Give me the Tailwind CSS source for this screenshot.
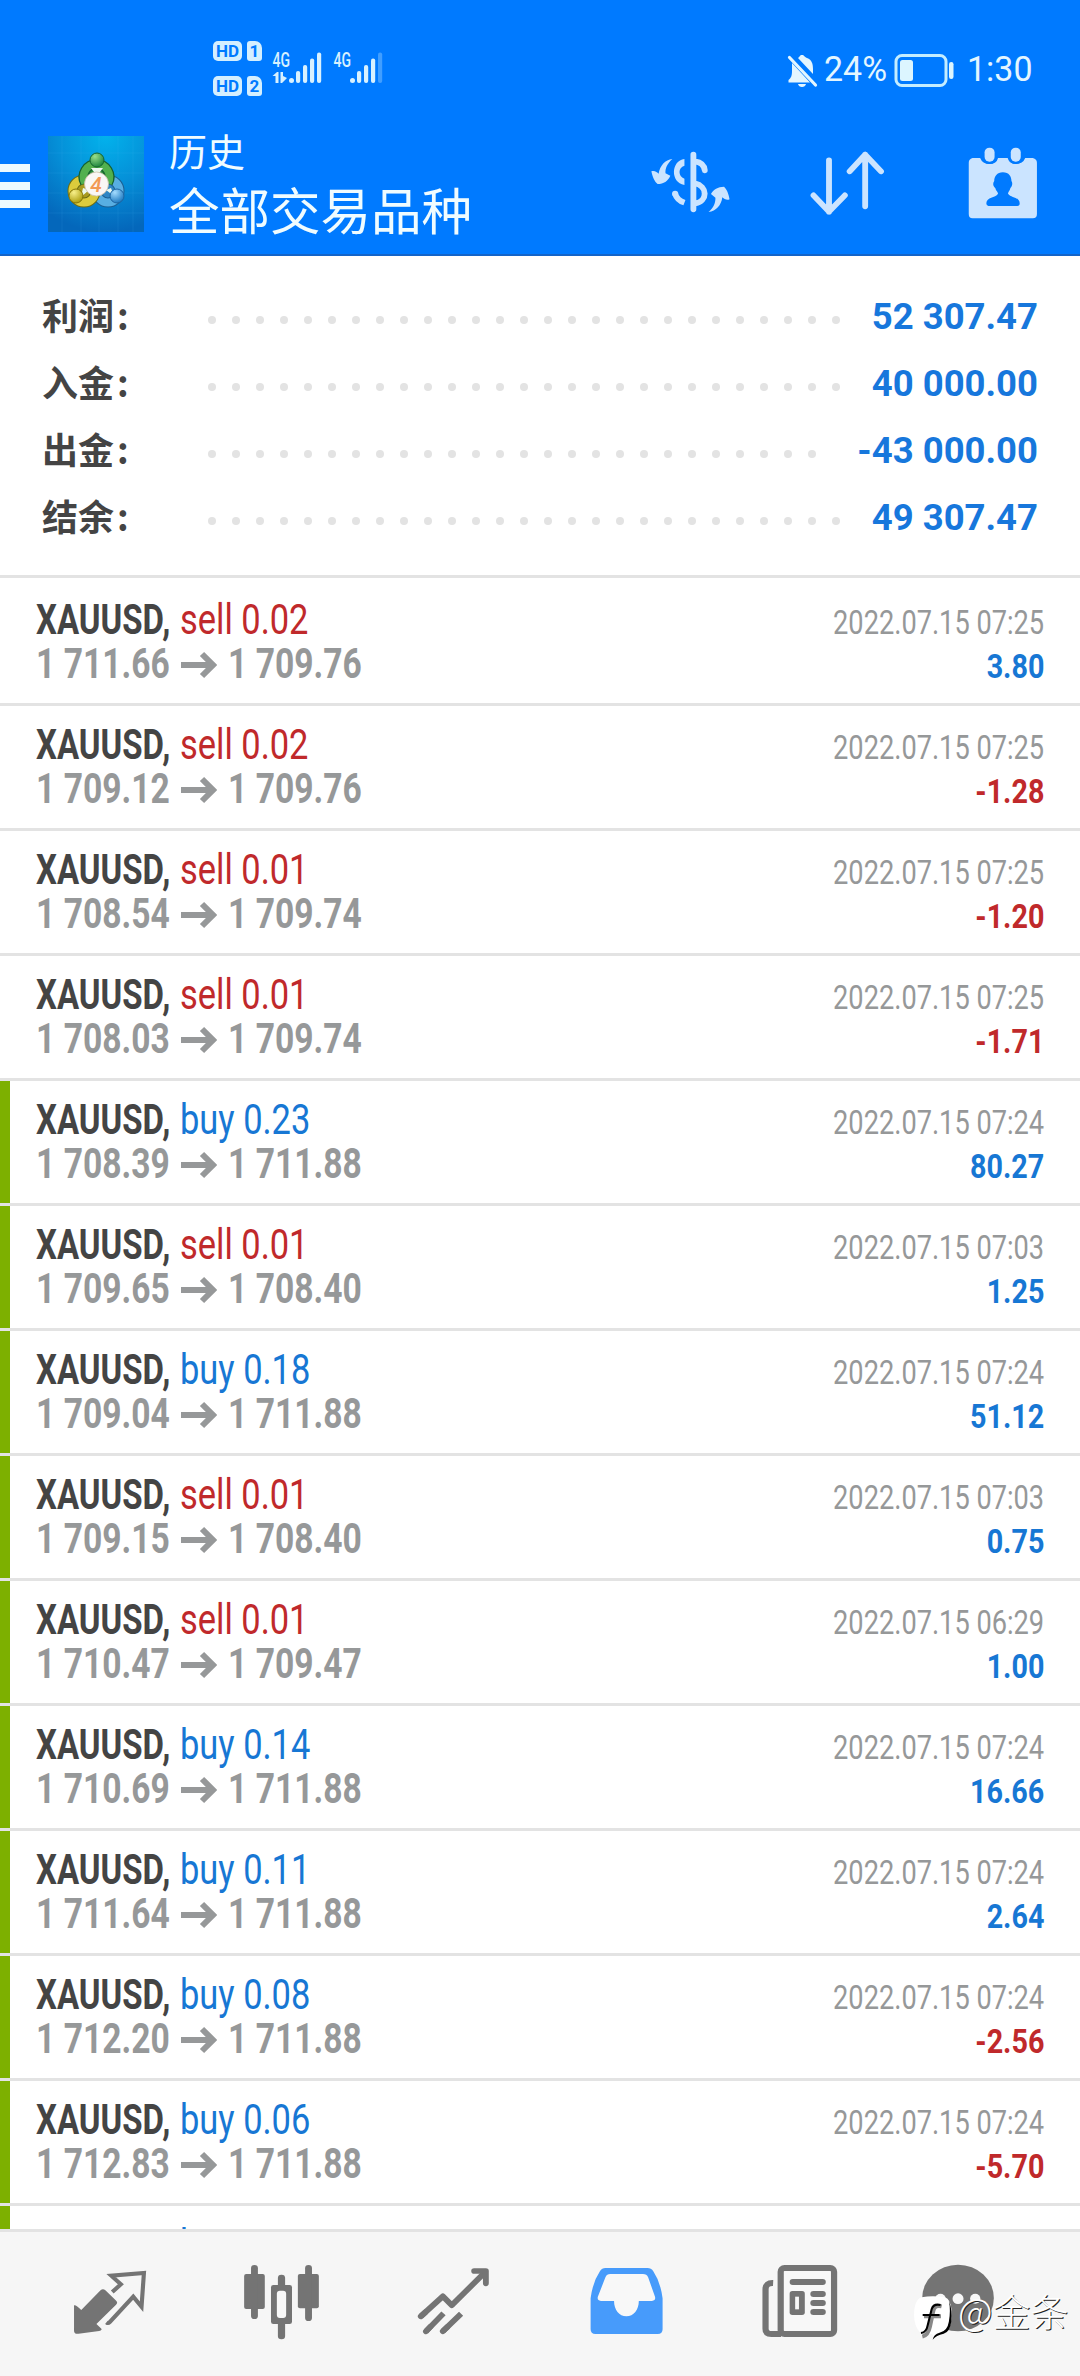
<!DOCTYPE html>
<html lang="zh-CN">
<head>
<meta charset="utf-8">
<title>历史</title>
<script src="https://cdn.jsdelivr.net/npm/@tailwindcss/browser@4"></script>
</head>
<body class="bg-white font-[Roboto,'Noto_Sans_CJK_SC',sans-serif] overflow-hidden">
<div class="relative flex h-[2376px] w-[1080px] flex-col overflow-hidden bg-white">

<header class="flex h-64 shrink-0 flex-col border-b-2 border-[#1464c8] bg-[#007aff]">
  <!-- status bar -->
  <div class="flex h-[120px] shrink-0 items-start justify-between pr-[46px] pl-[213px] text-[#e4f6ff]">
    <div class="flex pt-[41px]">
      <div class="flex w-[49px] flex-col gap-[15px] text-[17px] leading-5 font-bold text-[#007aff]">
        <div class="flex gap-[5px]"><span class="flex h-5 w-[29px] items-center justify-center rounded-[5px] bg-[#d4efff]">HD</span><span class="flex h-5 w-[15px] items-center justify-center rounded-[3px] rounded-tr-[7px] bg-[#d4efff]">1</span></div>
        <div class="flex gap-[5px]"><span class="flex h-5 w-[29px] items-center justify-center rounded-[5px] bg-[#d4efff]">HD</span><span class="flex h-5 w-[15px] items-center justify-center rounded-[3px] rounded-tr-[7px] bg-[#d4efff]">2</span></div>
      </div>
      <svg class="ml-[10px] h-[50px] w-[120px]" viewBox="0 0 120 50" fill="#d8f1ff">
        <text x="0.5" y="25.5" font-size="20" font-weight="500" textLength="17.5" lengthAdjust="spacingAndGlyphs">4G</text>
        <text x="61.5" y="25.5" font-size="20" font-weight="500" textLength="17.5" lengthAdjust="spacingAndGlyphs">4G</text>
        <path d="M0.500 35 L5 31 H6.500 V42 H3.500 V35ZM8.500 31 H11 V35 L15 37 L10 42 H8.500Z"/>
        <circle cx="19.500" cy="39.500" r="2.500"/><rect x="24" y="30" width="4.200" height="12" rx="2"/><rect x="31" y="24" width="4.200" height="18" rx="2"/><rect x="38" y="17.500" width="4.200" height="24.500" rx="2"/><rect x="45" y="11.500" width="4.200" height="30.500" rx="2"/>
        <circle cx="80.500" cy="39.500" r="2.500"/><rect x="85" y="30" width="4.200" height="12" rx="2"/><rect x="92" y="24" width="4.200" height="18" rx="2"/><rect x="99" y="17.500" width="4.200" height="24.500" rx="2"/><rect x="106" y="11.500" width="4.200" height="30.500" rx="2" opacity=".3"/>
      </svg>
    </div>
    <div class="flex items-center pt-[50px] text-[35px] leading-10">
      <svg class="h-9 w-[31px]" viewBox="0 0 31 36" fill="#e4f6ff"><path d="M11 6 C13 5 12.500 3 15 3 C17.500 3 17 5 20 6 C25 8 26 12 26 17 V22Z"/><path d="M5 11 L23 30.500 H1.500 V28 C4 26 5 24 5 19Z"/><path d="M2.500 5.500 L28.500 33" stroke="#e4f6ff" stroke-width="3.200" stroke-linecap="round"/><path d="M11 32 H19 C18.500 34 17 35 15 35 S11.500 34 11 32Z"/></svg>
      <span class="ml-[6px] w-[66px] origin-left scale-x-[0.97]">24%</span>
      <svg class="ml-[4px] h-9 w-[62px]" viewBox="0 0 62 36" fill="#dcf5ff"><rect x="2" y="3.500" width="50" height="30" rx="6" fill="none" stroke="#c4edff" stroke-width="3"/><rect x="6" y="8" width="13" height="21" rx="2.500"/><rect x="55" y="10" width="4.500" height="17" rx="2.200"/></svg>
      <span class="ml-[11px] w-[67px] origin-left scale-x-[0.97]">1:30</span>
    </div>
  </div>
  <!-- toolbar -->
  <div class="flex h-[134px] shrink-0 items-start">
    <div class="mt-[44px] flex w-[30px] flex-col gap-[10px]"><i class="h-2 bg-[#ecfaff]"></i><i class="h-2 bg-[#ecfaff]"></i><i class="h-2 bg-[#ecfaff]"></i></div>
    <svg class="mt-4 ml-[18px] h-24 w-24" viewBox="0 0 96 96">
      <defs>
        <radialGradient id="bg" cx=".6" cy="0" r="1"><stop offset="0" stop-color="#02b2ec"/><stop offset=".5" stop-color="#0590d8"/><stop offset="1" stop-color="#0467bb"/></radialGradient>
        <radialGradient id="g" cx=".35" cy=".25" r=".8"><stop offset="0" stop-color="#9be08c"/><stop offset="1" stop-color="#17803a"/></radialGradient>
        <radialGradient id="y" cx=".35" cy=".25" r=".8"><stop offset="0" stop-color="#f8f08a"/><stop offset="1" stop-color="#a89a08"/></radialGradient>
        <radialGradient id="b" cx=".35" cy=".25" r=".8"><stop offset="0" stop-color="#a4dcff"/><stop offset="1" stop-color="#1674bd"/></radialGradient>
      </defs>
      <rect width="96" height="96" fill="url(#bg)"/>
      <path d="M0 17H96M0 37H96M0 57H96M0 77H96M14 0V96M33 0V96M51 0V96M70 0V96M85 0V96" stroke="#5fd0ff" stroke-opacity=".1"/>
      <circle cx="60" cy="55" r="11.500" fill="#2f86c4" stroke="#1b5f92" stroke-width="10"/><circle cx="60" cy="55" r="11.500" fill="none" stroke="#58aee2" stroke-width="8"/>
      <circle cx="36" cy="55" r="11.500" fill="#a89a20" stroke="#6c6c14" stroke-width="10"/><circle cx="36" cy="55" r="11.500" fill="none" stroke="#dccb3c" stroke-width="8"/>
      <path d="M37 47 A13 13 0 1 1 60 47" fill="#2b8a3c" stroke="#16602f" stroke-width="10"/><path d="M37 47 A13 13 0 1 1 60 47" fill="none" stroke="#52b04e" stroke-width="7.500"/>
      <path d="M43 32 L49 40 L55 32ZM33 61 L41 54 L35 52ZM66 60 L58 54 L63 52Z" fill="#eaf8ee"/>
      <circle cx="49" cy="24" r="7" fill="url(#g)" stroke="#17662e"/>
      <circle cx="28" cy="60" r="7" fill="url(#y)" stroke="#857508"/>
      <circle cx="69" cy="60" r="7" fill="url(#b)" stroke="#1d65a3"/>
      <circle cx="48.500" cy="48" r="12" fill="#faf7f5" stroke="#cbbfa8" stroke-width=".8"/>
      <text x="48" y="55.500" text-anchor="middle" font-size="21" font-weight="500" font-style="italic" fill="#f29a55">4</text>
    </svg>
    <div class="mt-2 ml-[25px] flex flex-col text-[#f0fcff]">
      <span class="h-[55px] text-[38px] leading-[50px]">历史</span>
      <span class="h-[64px] text-[50.5px] leading-[60px]">全部交易品种</span>
    </div>
    <svg class="mt-6 ml-[178px] h-[80px] w-[82px]" viewBox="318 342 238.100 240" preserveAspectRatio="none" fill="#cbe4ff">
      <path d="M383 387 C367 402 362 416 363 430 L377 437 C370 453 358 462 340 462 C332 456 325 441 322 424 C330 420 339 426 343 431 C347 407 362 389 383 387Z"/>
      <path d="M488 546 C504 531 508 519 508 503 L495 492 C502 479 515 470 533 470 C541 478 546 490 549 508 C542 512 534 508 528 502 C525 526 510 544 488 546Z"/>
      <path d="M418 387 C379 391 376 458 418 465 V446 C399 439 399 412 418 407Z"/>
      <path d="M391 491 Q396 510 418 518" fill="none" stroke="#cbe4ff" stroke-width="17"/><circle cx="391" cy="491" r="9"/>
      <path d="M444 374V538M448 394Q475 398 477 421M448 460C486 468 486 514 450 520" stroke="#cbe4ff" stroke-width="17" stroke-linecap="round" fill="none"/>
    </svg>
    <svg class="mt-6 ml-[76px] h-[80px] w-[80px]" viewBox="775 342 232.300 240" preserveAspectRatio="none" fill="none" stroke="#cbe4ff" stroke-width="17" stroke-linecap="round" stroke-linejoin="round"><path d="M836 391V545M791 496L836 545L882 496M941 529V374M896 424L941 374L987 424"/></svg>
    <svg class="mt-6 ml-[78px] h-[80px] w-[74px]" viewBox="1235 342 214.900 240" preserveAspectRatio="none" fill="#cbe4ff">
      <path d="M1254 384 H1276 Q1283 402 1303 402 Q1324 402 1328 384 H1356 Q1361 402 1380 402 Q1400 402 1407 384 H1429 Q1441 387 1441 398 V552 Q1441 565 1429 565 H1254 Q1243 565 1243 552 V398 Q1243 387 1254 384Z"/>
      <g stroke="#007aff" stroke-width="14"><rect x="1289" y="353" width="29" height="42" rx="14"/><rect x="1365" y="353" width="29" height="42" rx="14"/></g>
      <rect x="1289" y="353" width="29" height="42" rx="14"/><rect x="1365" y="353" width="29" height="42" rx="14"/>
      <path d="M1342 427 C1360 427 1367 440 1367 453 C1372 461 1368 471 1364 474 C1362 483 1357 486 1357 491 C1366 504 1390 500 1391 520 Q1391 528 1384 528 H1300 Q1294 528 1294 520 C1295 500 1320 504 1328 491 C1328 486 1322 483 1320 474 C1315 470 1311 461 1317 453 C1317 440 1325 427 1342 427Z" fill="#007aff"/>
    </svg>
  </div>
</header>

<!-- account summary -->
<section id="summary" class="flex h-[322px] shrink-0 flex-col border-b-[3px] border-[#e3e3e3] pt-[26px] pr-[42px] pl-[42px]"></section>

<!-- deals -->
<main id="deals" class="flex h-[1651px] shrink-0 flex-col overflow-hidden pt-[3px]"></main>

<!-- bottom navigation -->
<nav class="flex h-[147px] shrink-0 border-t-[3px] border-[#e3e3e3] bg-[#f6f6f6] pl-6">
  <svg class="h-36 w-[172px] shrink-0" viewBox="69.700 156 499.500 432" preserveAspectRatio="none" fill="#747474">
    <path d="M215 376 Q220 373 236 390 L292 331 Q299 324 306 331 L336 361 Q344 368 337 374 L280 432 L293 445 Q299 450 288 453 L228 461 Q215 463 215 452Z"/>
    <path d="M326 336 L351 313 L323 287 L418 279 L411 380 L387 350 L318 427 Q314 431 309 427" fill="none" stroke="#747474" stroke-width="12"/>
  </svg>
  <svg class="h-36 w-[172px] shrink-0" viewBox="569.200 156 499.500 432" preserveAspectRatio="none" fill="#747474">
    <rect x="709" y="282" width="60" height="105" rx="6"/><rect x="729" y="255" width="20" height="162" rx="10"/>
    <rect x="865" y="282" width="61" height="103" rx="6"/><rect x="886" y="255" width="20" height="168" rx="10"/>
    <rect x="807" y="284" width="21" height="194" rx="10"/><rect x="787" y="315" width="61" height="117" rx="7"/><rect x="804" y="332" width="27" height="82" rx="9" fill="#f8f8f8"/>
  </svg>
  <svg class="h-36 w-[172px] shrink-0" viewBox="1068.700 156 499.500 432" preserveAspectRatio="none" fill="none" stroke="#747474" stroke-width="17">
    <path d="M1222 409L1286 349L1312 376L1410 275" stroke-linejoin="round"/><path d="M1377 273H1411V310" stroke-linecap="round" stroke-linejoin="round"/><path d="M1222 409L1235 397M1237 454L1250 440M1286 454L1299 441" stroke-linecap="round"/><path d="M1237 454L1288 400M1286 454L1339 401"/>
  </svg>
  <svg class="h-36 w-[172px] shrink-0" viewBox="0 156 499.500 432" preserveAspectRatio="none" fill="#479bfb">
    <path d="M190 264H312Q323 264 329 274Q350 306 356 355V448Q356 462 342 462H161Q147 462 147 448V355Q153 306 174 274Q180 264 190 264Z"/>
    <path d="M204 282H299Q310 282 314 292L334 350Q337 362 325 363H287C287 389 272 409 251 409S215 389 215 363H177Q165 362 168 350L190 292Q194 282 204 282Z" fill="#f8f8f8"/>
  </svg>
  <svg class="h-36 w-[172px] shrink-0" viewBox="499.500 156 499.500 432" preserveAspectRatio="none" fill="#747474">
    <path d="M677 309Q655 308 655 328V446Q655 462 672 462H700" fill="none" stroke="#747474" stroke-width="18"/>
    <rect x="699" y="264" width="155" height="198" rx="11" fill="#f8f8f8" stroke="#747474" stroke-width="18"/>
    <rect x="725" y="297" width="105" height="18" rx="9"/><rect x="725" y="333" width="44" height="72" rx="8"/><rect x="741" y="350" width="11" height="38" fill="#f8f8f8"/>
    <rect x="785" y="333" width="45" height="18" rx="9"/><rect x="785" y="360" width="45" height="18" rx="9"/><rect x="785" y="387" width="45" height="18" rx="9"/>
  </svg>
  <svg class="h-36 w-[196px] shrink-0" viewBox="999 156 569.200 432" preserveAspectRatio="none" fill="#747474">
    <ellipse cx="1214" cy="354" rx="104" ry="100"/><g fill="#f8f8f8"><circle cx="1163" cy="356" r="15"/><circle cx="1214" cy="356" r="16"/><circle cx="1264" cy="356" r="15"/></g>
  </svg>
</nav>

<!-- author signature -->
<div class="absolute top-[2290px] left-[912px] flex items-start">
  <svg class="h-[52px] w-[43px]" viewBox="1080 330 124.900 156" preserveAspectRatio="none">
    <path d="M1108 352 Q1140 345 1176 352 Q1192 358 1195 390 Q1197 440 1180 457 Q1160 464 1142 478 Q1143 466 1138 462 L1104 458 Q1086 440 1086 405 Q1086 360 1108 352Z" fill="#fff"/>
    <path d="M1187 362 Q1198 390 1194 425 Q1190 456 1172 461 Q1150 466 1140 479 Q1143 462 1160 458 Q1183 453 1187 425 Q1193 390 1187 362Z" fill="#000"/>
    <path d="M1166 379Q1146 374 1142 392L1132 440Q1127 466 1110 470M1115 409H1164" fill="none" stroke="#888" stroke-width="12"/>
    <path d="M1163 375Q1142 370 1137 388L1126 434Q1122 458 1106 459M1111 405H1160" fill="none" stroke="#000" stroke-width="6"/>
  </svg>
  <span class="-mt-[3px] ml-[3px] font-['Noto_Sans_CJK_SC'] text-[38px] leading-[46px] font-light whitespace-nowrap text-white [text-shadow:1px_1px_0_#222]">@金条</span>
</div>
</div>

<script>
const summary = [['利润', '52 307.47', 27], ['入金', '40 000.00', 27], ['出金', '-43 000.00', 26], ['结余', '49 307.47', 27]];
document.getElementById('summary').innerHTML = summary.map(([label, value, dots]) => `
  <div class="flex h-[67px] items-start text-[36px] leading-[67px] font-bold">
    <span class="-mt-px flex w-[166px] gap-[3px] font-['Noto_Sans_CJK_SC'] text-[#444]">${label}<span>:</span></span>
    <span class="mt-[34px] flex gap-4">${'<i class="size-2 rounded-full bg-[#e3e3e3]"></i>'.repeat(dots)}</span>
    <span class="mt-px ml-auto text-[36.5px] text-[#1777dc]">${value}</span>
  </div>`).join('');

const deals = [
  ['sell 0.02', '1 711.66', '1 709.76', '07:25', '3.80', 0],
  ['sell 0.02', '1 709.12', '1 709.76', '07:25', '-1.28', 0],
  ['sell 0.01', '1 708.54', '1 709.74', '07:25', '-1.20', 0],
  ['sell 0.01', '1 708.03', '1 709.74', '07:25', '-1.71', 0],
  ['buy 0.23', '1 708.39', '1 711.88', '07:24', '80.27', 1],
  ['sell 0.01', '1 709.65', '1 708.40', '07:03', '1.25', 1],
  ['buy 0.18', '1 709.04', '1 711.88', '07:24', '51.12', 1],
  ['sell 0.01', '1 709.15', '1 708.40', '07:03', '0.75', 1],
  ['sell 0.01', '1 710.47', '1 709.47', '06:29', '1.00', 1],
  ['buy 0.14', '1 710.69', '1 711.88', '07:24', '16.66', 1],
  ['buy 0.11', '1 711.64', '1 711.88', '07:24', '2.64', 1],
  ['buy 0.08', '1 712.20', '1 711.88', '07:24', '-2.56', 1],
  ['buy 0.06', '1 712.83', '1 711.88', '07:24', '-5.70', 1],
  ['buy 0.05', '1 713.20', '1 711.88', '07:24', '-6.60', 1],
];
document.getElementById('deals').innerHTML = deals.map(([side, open, close, time, profit, marked]) => `
  <div class="flex h-[125px] shrink-0 border-b-[3px] border-[#e3e3e3]">
    <i class="${marked ? 'w-[10px] shrink-0 bg-[#7db000]' : 'w-[10px] shrink-0'}"></i>
    <div class="ml-[26px] flex flex-col pt-[17px] text-[42px] leading-[44px] whitespace-nowrap">
      <div class="flex"><span class="w-[144px] origin-left scale-x-[0.785] font-bold text-[#444]">XAUUSD,</span><span class="${side[0] === 's' ? 'origin-left scale-x-[0.82] text-[#c0292b]' : 'origin-left scale-x-[0.82] text-[#1777d4]'}">${side}</span></div>
      <div class="flex items-center font-bold text-[#969899]"><span class="w-[145px] origin-left scale-x-[0.8]">${open}</span><svg class="mt-0.5 h-7 w-9" viewBox="0 0 36 28" fill="none" stroke="#969899" stroke-width="6"><path d="M0 14H32M21 3L32 14L21 25"/></svg><span class="ml-[11px] origin-left scale-x-[0.8]">${close}</span></div>
    </div>
    <div class="ml-auto flex flex-col items-end pt-5 pr-[36px] text-[33px] leading-[44px] whitespace-nowrap">
      <span class="origin-right scale-x-[0.824] text-[#969899]">2022.07.15 ${time}</span>
      <span class="${profit[0] === '-' ? 'origin-right scale-x-[0.87] font-bold text-[#c0292b]' : 'origin-right scale-x-[0.87] font-bold text-[#1777d4]'}">${profit}</span>
    </div>
  </div>`).join('');
</script>
</body>
</html>
